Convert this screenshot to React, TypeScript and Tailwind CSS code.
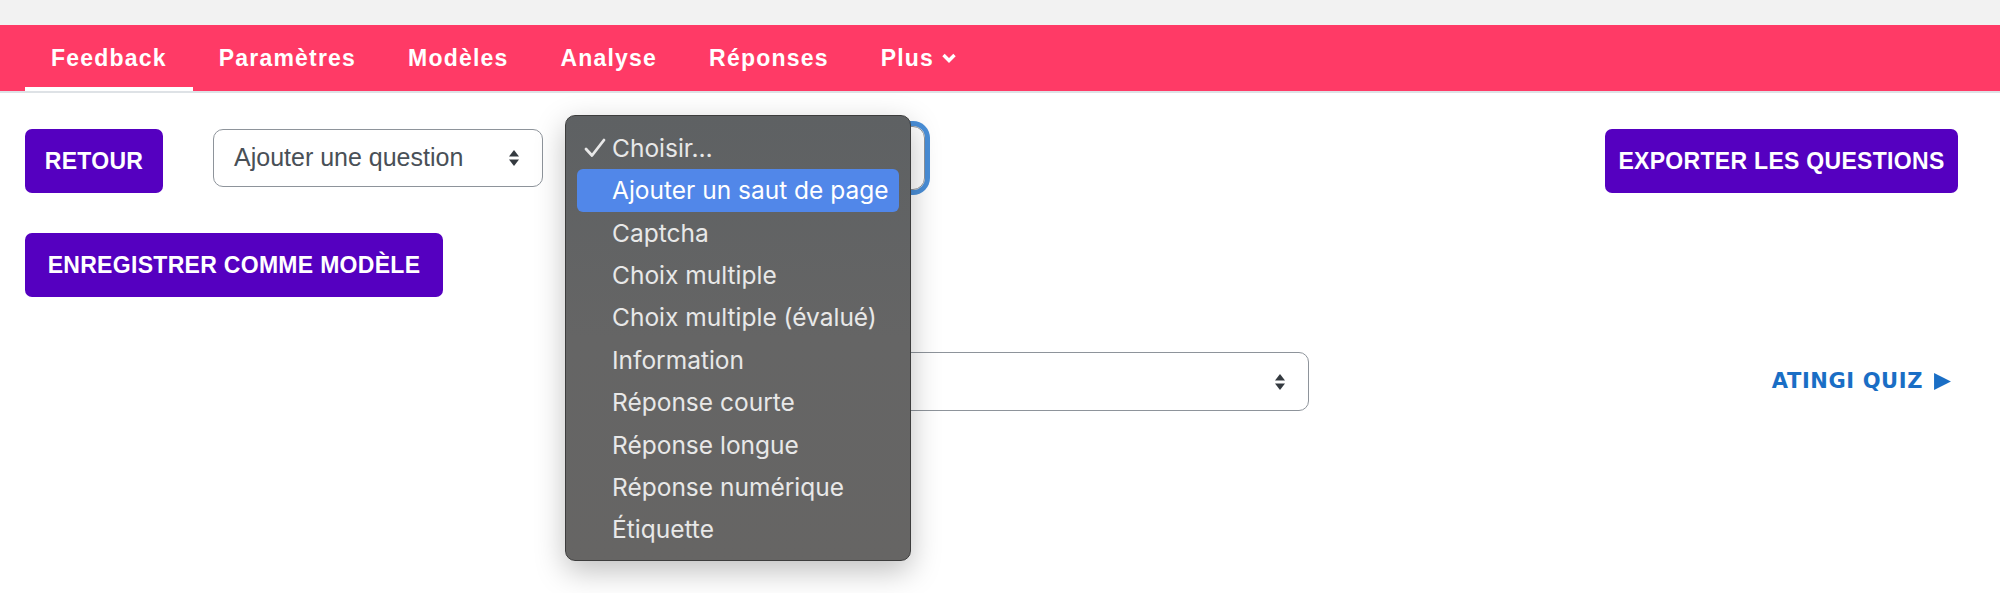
import React from "react";

const nav_items = ["Feedback", "Paramètres", "Modèles", "Analyse", "Réponses"];

const menu_items = [
    "Ajouter un saut de page",
    "Captcha",
    "Choix multiple",
    "Choix multiple (évalué)",
    "Information",
    "Réponse courte",
    "Réponse longue",
    "Réponse numérique",
    "Étiquette",
];

function SortArrows() {
    return (
        <svg width="12" height="18" viewBox="0 0 12 18" className="shrink-0">
            <path d="M6 1 L11 7.5 H1 Z" fill="#343a40" />
            <path d="M6 17 L11 10.5 H1 Z" fill="#343a40" />
        </svg>
    );
}

function PurpleButton({ label, width }: { label: string; width: string }) {
    return (
        <button className={`${width} h-[64px] rounded-[7px] bg-[#5500c0] text-white font-bold text-[23px] tracking-[0.3px] font-['Liberation_Sans',Arial,sans-serif] whitespace-nowrap flex items-center justify-center`}>
            {label}
        </button>
    );
}

function OpenMenu() {
    return (
        <div className="absolute left-[565px] top-[115px] w-[346px] h-[446px] rounded-[10px] border border-[#3d3d3d] bg-gradient-to-b from-[#5e6163] via-[#656565] to-[#666564] shadow-[0_10px_30px_rgba(0,0,0,0.25)] py-[11px] px-[11px] font-['Inter','Noto_Sans',sans-serif] text-[24.5px] text-[#e8e8e8]">
            <div className="h-[42.4px] flex items-center">
                <svg width="22" height="20" viewBox="0 0 22 20" className="ml-[7px] mr-[6px]">
                    <path d="M2 11 L8 17.5 L20 2" stroke="#e8e8e8" strokeWidth="2.8" fill="none" strokeLinecap="round" strokeLinejoin="round" />
                </svg>
                <span>Choisir…</span>
            </div>
            {menu_items.map((item, i) => (
                <div
                    key={item}
                    className={`h-[42.4px] flex items-center pl-[35px] rounded-[6px] ${i === 0 ? "bg-[#5187e9] text-white" : ""}`}
                >
                    {item}
                </div>
            ))}
        </div>
    );
}

export default function App() {
    return (
        <div className="relative w-[2000px] h-[593px] bg-white overflow-hidden">
            <div className="h-[25px] bg-[#f2f2f2]" />
            <nav className="h-[68px] bg-[#ff3a66] border-b-2 border-[#dee2e6] flex items-stretch pl-[25px] font-['Liberation_Sans',Arial,sans-serif] font-bold text-white text-[23px] tracking-[1.2px]">
                {nav_items.map((item, i) => (
                    <div key={item} className={`relative px-[26px] flex items-center ${i === 0 ? "border-b-4 border-white pt-[4px]" : ""}`}>
                        {item}
                    </div>
                ))}
                <div className="px-[26px] flex items-center gap-[7px]">
                    Plus
                    <svg width="16" height="12" viewBox="0 0 16 12">
                        <path d="M2.5 3 L8 8.5 L13.5 3" stroke="white" strokeWidth="3.4" fill="none" />
                    </svg>
                </div>
            </nav>

            <div className="pl-[25px] pr-[42px] pt-[36px]">
                <div className="flex items-start">
                    <PurpleButton label="RETOUR" width="w-[138px]" />
                    <div className="ml-[50px] w-[330px] h-[58px] rounded-[10px] border-[1.5px] border-[#8e949b] flex items-center justify-between pl-[20px] pr-[22px] text-[25px] text-[#495057] font-['Liberation_Sans',Arial,sans-serif]">
                        <span>Ajouter une question</span>
                        <SortArrows />
                    </div>
                    <div className="ml-[34px] -mt-[3px] w-[348px] h-[64px] rounded-[12px] border-[1.5px] border-[#8e949b] ring-[5px] ring-[#4a8fd8]" />
                    <div className="ml-auto">
                        <PurpleButton label="EXPORTER LES QUESTIONS" width="w-[353px]" />
                    </div>
                </div>

                <div className="mt-[40px]">
                    <PurpleButton label="ENREGISTRER COMME MODÈLE" width="w-[418px]" />
                </div>

                <div className="mt-[55px] flex items-center">
                    <div className="ml-[580px] w-[704px] h-[59px] rounded-[10px] border-[1.5px] border-[#8e949b] flex items-center justify-end pr-[22px]">
                        <SortArrows />
                    </div>
                    <a className="ml-auto mr-[6px] flex items-center gap-[10px] text-[#1a6ec5] font-bold text-[21px] tracking-[0.6px] font-['DejaVu_Sans',Verdana,sans-serif]">
                        ATINGI QUIZ
                        <svg width="19" height="19" viewBox="0 0 18 18">
                            <path d="M1 1 L17 9 L1 17 Z" fill="#1a6ec5" />
                        </svg>
                    </a>
                </div>
            </div>

            <OpenMenu />
        </div>
    );
}
